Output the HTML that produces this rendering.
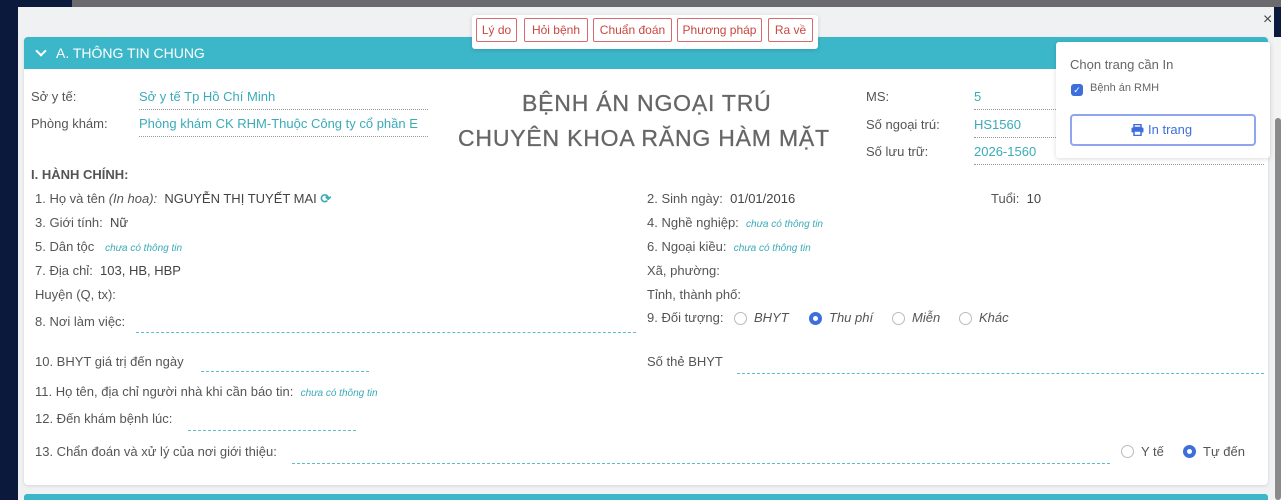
<!DOCTYPE html>
<html><head><meta charset="utf-8"><style>
*{box-sizing:border-box;margin:0;padding:0}
body{width:1281px;height:500px;overflow:hidden;background:#0b1a3c;font-family:"Liberation Sans",sans-serif;color:#555;font-size:13px;position:relative}
.topband{position:absolute;left:0;top:0;width:1281px;height:7px;background:#6b6b6f}
.topband:before{content:"";position:absolute;left:0;top:0;width:72px;height:7px;background:#0b1a3c}
.modal{position:absolute;left:18px;top:7px;width:1256px;height:493px;background:#f0f1f3}
.card{position:absolute;left:6px;top:30px;width:1244px;height:448px;background:#fff;border-radius:4px;box-shadow:0 1px 3px rgba(0,0,0,.12)}
.hdr{position:absolute;left:0;top:0;width:1244px;height:32px;background:#3bb7c9;border-radius:4px 4px 0 0;color:#fff;font-size:14px;line-height:32px;padding-left:32px}
.hdr:before{content:"";position:absolute;left:13px;top:10px;width:6px;height:6px;border-right:2px solid #fff;border-bottom:2px solid #fff;transform:rotate(45deg)}
.t{position:absolute;white-space:nowrap}
.v{color:#3aabb8}
.dl{position:absolute;border-bottom:1px dotted #999;height:0}
.dt{position:absolute;border-bottom:1px dashed #5bbfc9;height:0}
.na{color:#3aabb8;font-style:italic;font-size:10px}
.tabs{position:absolute;left:472px;top:15px;width:346px;height:34px;background:#fff;box-shadow:0 1px 4px rgba(0,0,0,.15);border-radius:3px}
.tab{position:absolute;top:3px;height:24px;border:1px solid #d76a6a;border-radius:2px;color:#c9473f;font-size:12px;line-height:22px;text-align:center}
.rad{position:absolute;width:13px;height:13px;border:1px solid #bbb;border-radius:50%}
.rad.on{border:4px solid #3d6fdc;background:#fff}
.pop{position:absolute;left:1056px;top:42px;width:214px;height:116px;background:#fff;box-shadow:0 1px 5px rgba(0,0,0,.15);border-radius:3px}
.scroll{position:absolute;left:1274px;top:37px;width:7px;height:463px;background:#f3f3f3}
.thumb{position:absolute;left:1275px;top:118px;width:6px;height:382px;background:#8a8a8a;border-radius:3px}
.ttl{font-size:23px;color:#666;letter-spacing:0.8px;-webkit-text-stroke:0.3px #666}
</style></head><body>
<div class="topband"></div>
<div class="modal">
 <div class="card">
  <div class="hdr">A. THÔNG TIN CHUNG</div>
 </div>
 <div style="position:absolute;left:6px;top:487px;width:1244px;height:6px;background:#3bb7c9;border-radius:3px 3px 0 0"></div>
</div>
<div class="t" style="left:1263px;top:11px;font-size:16px;color:#444">×</div>
<div class="tabs">
 <div class="tab" style="left:4px;width:41px">Lý do</div>
 <div class="tab" style="left:52px;width:64px">Hỏi bệnh</div>
 <div class="tab" style="left:121px;width:79px">Chuẩn đoán</div>
 <div class="tab" style="left:205px;width:85px">Phương pháp</div>
 <div class="tab" style="left:296px;width:45px">Ra về</div>
</div>

<div class="t" style="left:31px;top:89px">Sở y tế:</div>
<div class="t v" style="left:139px;top:89px">Sở y tế Tp Hồ Chí Minh</div>
<div class="dl" style="left:139px;top:109px;width:289px"></div>
<div class="t" style="left:31px;top:116px">Phòng khám:</div>
<div class="t v" style="left:139px;top:116px;width:289px;overflow:hidden">Phòng khám CK RHM-Thuộc Công ty cổ phần E</div>
<div class="dl" style="left:139px;top:136px;width:289px"></div>

<div class="t ttl" style="left:522px;top:90px">BỆNH ÁN NGOẠI TRÚ</div>
<div class="t ttl" style="left:458px;top:125px">CHUYÊN KHOA RĂNG HÀM MẶT</div>

<div class="t" style="left:866px;top:89px">MS:</div>
<div class="t v" style="left:974px;top:89px">5</div>
<div class="dl" style="left:974px;top:109px;width:290px"></div>
<div class="t" style="left:866px;top:117px">Số ngoại trú:</div>
<div class="t v" style="left:974px;top:117px">HS1560</div>
<div class="dl" style="left:974px;top:137px;width:290px"></div>
<div class="t" style="left:866px;top:144px">Số lưu trữ:</div>
<div class="t v" style="left:974px;top:144px">2026-1560</div>
<div class="dl" style="left:974px;top:164px;width:290px"></div>

<div class="pop">
 <div class="t" style="left:14px;top:15px;font-size:13px;color:#666">Chọn trang cần In</div>
 <div class="t" style="left:15px;top:42px;width:12px;height:12px;background:#3d6fdc;border-radius:3px;color:#fff;font-size:9px;line-height:12px;text-align:center">✓</div>
 <div class="t" style="left:34px;top:40px;font-size:11px;color:#666">Bệnh án RMH</div>
 <div class="t" style="left:14px;top:72px;width:186px;height:32px;border:2px solid #8fa6ec;border-radius:4px;color:#3d6fdc;line-height:28px;font-size:13px">
  <svg style="position:absolute;left:59px;top:8px" width="13" height="12" viewBox="0 0 13 12"><rect x="3" y="0.5" width="7" height="3" fill="none" stroke="#3d6fdc" stroke-width="1.5"/><rect x="0.5" y="3.5" width="12" height="5" rx="1" fill="#3d6fdc"/><rect x="3" y="7" width="7" height="4.5" fill="#fff" stroke="#3d6fdc" stroke-width="1.5"/></svg>
  <span style="position:absolute;left:76px;top:0">In trang</span>
 </div>
</div>

<div class="t" style="left:31px;top:167px;font-weight:bold;font-size:13px;color:#555">I. HÀNH CHÍNH:</div>
<div class="t" style="left:35px;top:191px">1. Họ và tên <i>(In hoa):</i>&nbsp; <span style="color:#444">NGUYỄN THỊ TUYẾT MAI</span> <span style="color:#3aabb8;font-weight:bold">⟳</span></div>
<div class="t" style="left:35px;top:215px">3. Giới tính:&nbsp; <span style="color:#444">Nữ</span></div>
<div class="t" style="left:35px;top:239px">5. Dân tộc&nbsp;&nbsp; <span class="na">chưa có thông tin</span></div>
<div class="t" style="left:35px;top:263px">7. Địa chỉ:&nbsp; <span style="color:#444">103, HB, HBP</span></div>
<div class="t" style="left:35px;top:287px">Huyện (Q, tx):</div>
<div class="t" style="left:35px;top:314px">8. Nơi làm việc:</div>
<div class="dt" style="left:136px;top:332px;width:500px"></div>

<div class="t" style="left:647px;top:191px">2. Sinh ngày:&nbsp; <span style="color:#444">01/01/2016</span></div>
<div class="t" style="left:991px;top:191px">Tuổi:&nbsp; <span style="color:#444">10</span></div>
<div class="t" style="left:647px;top:215px">4. Nghề nghiệp:&nbsp; <span class="na">chưa có thông tin</span></div>
<div class="t" style="left:647px;top:239px">6. Ngoại kiều:&nbsp; <span class="na">chưa có thông tin</span></div>
<div class="t" style="left:647px;top:263px">Xã, phường:</div>
<div class="t" style="left:647px;top:287px">Tỉnh, thành phố:</div>
<div class="t" style="left:647px;top:310px">9. Đối tượng:</div>
<span class="rad" style="left:734px;top:312px"></span><i class="t" style="left:754px;top:310px">BHYT</i>
<span class="rad on" style="left:809px;top:312px"></span><i class="t" style="left:829px;top:310px">Thu phí</i>
<span class="rad" style="left:892px;top:312px"></span><i class="t" style="left:912px;top:310px">Miễn</i>
<span class="rad" style="left:959px;top:312px"></span><i class="t" style="left:979px;top:310px">Khác</i>

<div class="t" style="left:35px;top:354px">10. BHYT giá trị đến ngày</div>
<div class="dt" style="left:201px;top:371px;width:168px"></div>
<div class="t" style="left:647px;top:354px">Số thẻ BHYT</div>
<div class="dt" style="left:737px;top:373px;width:527px"></div>
<div class="t" style="left:35px;top:384px">11. Họ tên, địa chỉ người nhà khi cần báo tin:&nbsp; <span class="na">chưa có thông tin</span></div>
<div class="t" style="left:35px;top:411px">12. Đến khám bệnh lúc:</div>
<div class="dt" style="left:188px;top:430px;width:168px"></div>
<div class="t" style="left:35px;top:444px">13. Chẩn đoán và xử lý của nơi giới thiệu:</div>
<div class="dt" style="left:292px;top:463px;width:818px"></div>
<span class="rad" style="left:1121px;top:445px"></span><div class="t" style="left:1141px;top:444px">Y tế</div>
<span class="rad on" style="left:1183px;top:445px"></span><div class="t" style="left:1203px;top:444px">Tự đến</div>

<div class="scroll"></div><div class="thumb"></div>
</body></html>
